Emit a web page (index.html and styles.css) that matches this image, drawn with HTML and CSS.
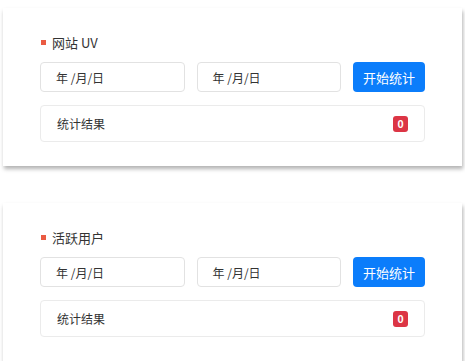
FILE: index.html
```html
<!DOCTYPE html>
<html lang="zh-CN">
  <head>
    <meta charset="UTF-8" />
    <meta name="viewport" content="width=device-width, initial-scale=1.0" />
    <title>统计</title>
    <link rel="stylesheet" href="styles.css">
  </head>
  <body>
    <div class="panel">
      <div class="panel-title"><span class="dot"></span>网站 UV</div>
      <div class="query">
        <div class="date-field">年 /月/日</div>
        <div class="date-field">年 /月/日</div>
        <button type="button" class="btn">开始统计</button>
      </div>
      <div class="result">
        <span>统计结果</span>
        <span class="badge">0</span>
      </div>
    </div>

    <div class="panel">
      <div class="panel-title"><span class="dot"></span>活跃用户</div>
      <div class="query">
        <div class="date-field">年 /月/日</div>
        <div class="date-field">年 /月/日</div>
        <button type="button" class="btn">开始统计</button>
      </div>
      <div class="result">
        <span>统计结果</span>
        <span class="badge">0</span>
      </div>
    </div>
  </body>
</html>
```

FILE: styles.css
```css
body {
  margin: 0;
  padding: 8px 3px 0 3px;
  display: flex;
  flex-direction: column;
  gap: 37px;
  background-color: #fff;
  color: #333;
  font-family: "Noto Sans CJK SC", "Noto Sans", sans-serif;
}

.panel {
  width: 459px;
  box-sizing: border-box;
  padding: 24px 37px 24px 37px;
  background-color: #fff;
  box-shadow: 1px 3px 4px rgba(0, 0, 0, 0.3);
}

.panel-title {
  display: flex;
  align-items: center;
  height: 20px;
  font-size: 13px;
  color: #333;
}

.dot {
  width: 5px;
  height: 5px;
  margin: 0 6px 0 1px;
  background-color: #ea5b43;
}

.query {
  display: grid;
  grid-template-columns: 1fr 1fr 72px;
  gap: 12px;
  margin-top: 10px;
}

.date-field {
  height: 30px;
  box-sizing: border-box;
  padding-left: 15px;
  display: flex;
  align-items: center;
  border: 1px solid #e2e2e2;
  border-radius: 4px;
  font-size: 12px;
  color: #333;
}

.btn {
  height: 30px;
  padding: 0;
  border: none;
  border-radius: 4px;
  background-color: #0b7dfb;
  color: #fff;
  font-family: inherit;
  font-size: 13px;
  cursor: pointer;
}

.result {
  display: flex;
  justify-content: space-between;
  align-items: center;
  height: 37px;
  box-sizing: border-box;
  margin-top: 13px;
  padding: 0 16px 0 16px;
  border: 1px solid #ebebeb;
  border-radius: 4px;
  font-size: 12px;
}

.badge {
  width: 15px;
  height: 16px;
  line-height: 16px;
  text-align: center;
  border-radius: 3px;
  background-color: #dc3545;
  color: #fff;
  font-family: "Liberation Sans", sans-serif;
  font-size: 11px;
  font-weight: bold;
}
```
